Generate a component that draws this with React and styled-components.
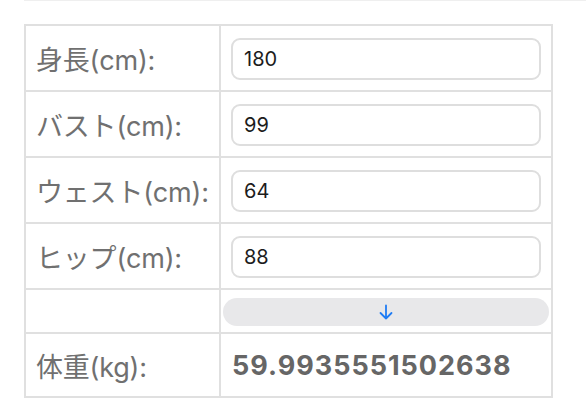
import React from "react";
import styled, { createGlobalStyle } from "styled-components";

const Global = createGlobalStyle`
  html, body { margin: 0; padding: 0; background: #fff; }
  body { font-family: Inter, "Noto Sans CJK JP", sans-serif; }
`;

const Page = styled.div`
  padding-left: 24px;
  width: 562px;
`;

const TopRule = styled.div`
  height: 1px;
  background: #efefef;
`;

const Grid = styled.div`
  margin-top: 23px;
  display: grid;
  grid-template-columns: 195px 332px;
  grid-template-rows: 66px 66px 66px 66px 44px 64px;
  width: max-content;
  border-left: 2px solid #e0e0e0;
  border-top: 2px solid #e0e0e0;
`;

const Cell = styled.div`
  border-right: 2px solid #e0e0e0;
  border-bottom: 2px solid #e0e0e0;
  display: flex;
  align-items: center;
  padding: ${(p) => p.$pad || "0 10px"};
  min-width: 0;
`;

const Label = styled.span`
  font-family: Inter, "Noto Sans CJK JP", sans-serif;
  font-size: 27px;
  color: #707070;
  white-space: nowrap;
  letter-spacing: -0.2px;
`;

const Input = styled.input`
  box-sizing: border-box;
  width: 100%;
  height: 42px;
  margin-top: 2px;
  border: 2px solid #dedede;
  border-radius: 9px;
  padding: 0 11px;
  font-family: Inter, sans-serif;
  font-size: 20px;
  color: #1c1c1c;
  background: #fff;
  outline: none;
`;

const CalcButton = styled.button`
  width: 100%;
  height: 28px;
  margin-top: 2px;
  border: none;
  border-radius: 14px;
  background: #e8e8ea;
  display: flex;
  align-items: center;
  justify-content: center;
  padding: 0;
  cursor: pointer;
`;

const Result = styled.span`
  font-family: Inter, sans-serif;
  font-weight: 700;
  font-size: 27px;
  color: #666;
  letter-spacing: 1px;
  white-space: nowrap;
  margin-left: 1px;
`;

const ArrowDown = () => (
  <svg width="14" height="16" viewBox="0 0 14 16" fill="none">
    <path d="M7 1.5V14.5M1.5 9L7 14.5L12.5 9" stroke="#1f7cf4" strokeWidth="1.8" strokeLinecap="round" strokeLinejoin="round" />
  </svg>
);

const fields = [
  { label: "身長(cm):", value: "180" },
  { label: "バスト(cm):", value: "99" },
  { label: "ウェスト(cm):", value: "64" },
  { label: "ヒップ(cm):", value: "88" },
];

export default function App() {
  return (
    <>
      <Global />
      <Page>
        <TopRule />
        <Grid>
          {fields.map((f) => (
            <React.Fragment key={f.label}>
              <Cell>
                <Label>{f.label}</Label>
              </Cell>
              <Cell>
                <Input defaultValue={f.value} />
              </Cell>
            </React.Fragment>
          ))}
          <Cell />
          <Cell $pad="0 2px">
            <CalcButton>
              <ArrowDown />
            </CalcButton>
          </Cell>
          <Cell>
            <Label>体重(kg):</Label>
          </Cell>
          <Cell>
            <Result>59.9935551502638</Result>
          </Cell>
        </Grid>
      </Page>
    </>
  );
}
